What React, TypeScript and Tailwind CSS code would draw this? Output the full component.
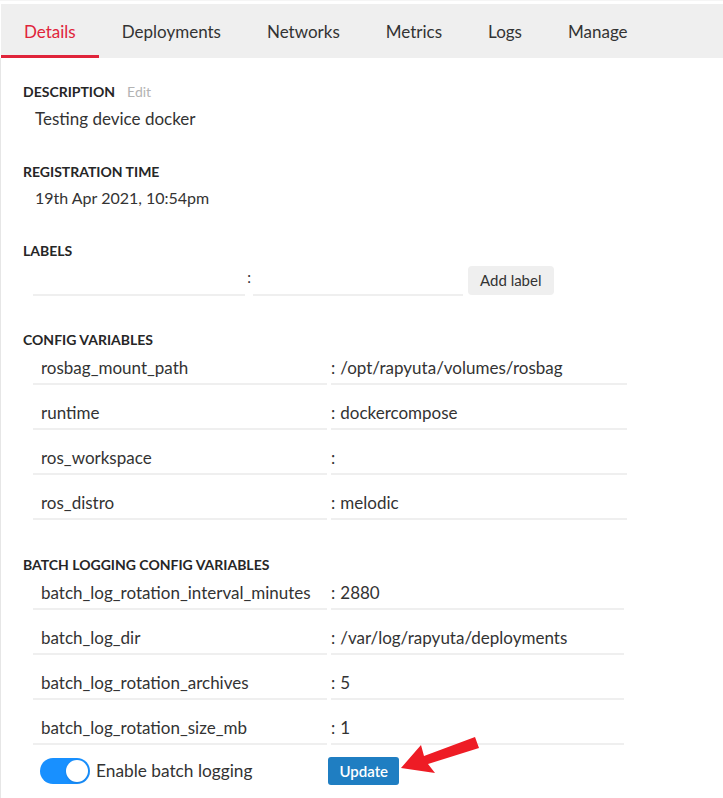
import { useState } from "react"

const tabs = ["Details", "Deployments", "Networks", "Metrics", "Logs", "Manage"]

const configVars = [
  { key: "rosbag_mount_path", value: "/opt/rapyuta/volumes/rosbag" },
  { key: "runtime", value: "dockercompose" },
  { key: "ros_workspace", value: "" },
  { key: "ros_distro", value: "melodic" },
]

const batchVars = [
  { key: "batch_log_rotation_interval_minutes", value: "2880" },
  { key: "batch_log_dir", value: "/var/log/rapyuta/deployments" },
  { key: "batch_log_rotation_archives", value: "5" },
  { key: "batch_log_rotation_size_mb", value: "1" },
]

function SectionTitle({ children }: { children: React.ReactNode }) {
  return <h3 className="text-[14px] font-bold uppercase text-[#262626] leading-5">{children}</h3>
}

function VarRow({ k, v, valueWidth }: { k: string; v: string; valueWidth: string }) {
  return (
    <div className="flex h-[35px]">
      <div className="w-[294px] h-full flex items-end pb-[3px] pl-2 border-b-2 border-[#efefef] text-[17px] leading-6 text-[#333] whitespace-nowrap">
        {k}
      </div>
      <div className={`${valueWidth} ml-1 h-full flex items-end pb-[3px] border-b-2 border-[#efefef] text-[17px] leading-6 text-[#333]`}>
        <span className="mr-[5px]">:</span>
        {v}
      </div>
    </div>
  )
}

export default function App() {
  const [active] = useState("Details")
  const [enabled, setEnabled] = useState(true)

  return (
    <div className="w-[723px] h-[798px] bg-white font-['Lato',sans-serif] text-[#333] overflow-hidden relative">
      {/* Tabs */}
      <div className="pt-[3px] border-t border-[#f5f5f5]">
        <nav className="flex bg-[#efefef] h-[54px] ml-px">
          {tabs.map((t) => (
            <button
              key={t}
              className={`px-[23px] pt-[4px] h-full text-[17px] border-b-[3px] ${
                t === active ? "text-[#e0243a] border-[#e0243a]" : "text-[#333] border-transparent"
              }`}
            >
              {t}
            </button>
          ))}
        </nav>
      </div>

      <div className="border-l border-[#e6e6e6] h-full pl-[22px] pt-[23px]">
        {/* Description */}
        <div className="flex items-center gap-3">
          <SectionTitle>Description</SectionTitle>
          <span className="text-[14px] text-[#b3b3b3]">Edit</span>
        </div>
        <p className="text-[17px] leading-6 pl-3 mt-[5px]">Testing device docker</p>

        {/* Registration time */}
        <div className="mt-[31px]">
          <SectionTitle>Registration time</SectionTitle>
        </div>
        <p className="text-[16px] leading-6 pl-3 mt-[4px]">19th Apr 2021, 10:54pm</p>

        {/* Labels */}
        <div className="mt-[31px]">
          <SectionTitle>Labels</SectionTitle>
        </div>
        <div className="flex items-end mt-[5px] pl-[10px]">
          <div className="w-[212px] h-[28px] border-b-2 border-[#efefef]" />
          <span className="w-[8px] text-center self-center text-[15px] -mt-2">:</span>
          <div className="w-[210px] h-[28px] border-b-2 border-[#efefef]" />
          <button className="ml-[5px] mb-[1px] h-[29px] px-3 rounded bg-[#efefef] text-[15px] text-[#333]">
            Add label
          </button>
        </div>

        {/* Config variables */}
        <div className="mt-[34px]">
          <SectionTitle>Config variables</SectionTitle>
        </div>
        <div className="pl-[10px] flex flex-col gap-[10px]">
          {configVars.map((r) => (
            <VarRow key={r.key} k={r.key} v={r.value} valueWidth="w-[296px]" />
          ))}
        </div>

        {/* Batch logging */}
        <div className="mt-[35px]">
          <SectionTitle>Batch logging config variables</SectionTitle>
        </div>
        <div className="pl-[10px] flex flex-col gap-[10px]">
          {batchVars.map((r) => (
            <VarRow key={r.key} k={r.key} v={r.value} valueWidth="w-[293px]" />
          ))}
        </div>

        <div className="flex items-center pl-[17px] mt-[12px]">
          <button
            onClick={() => setEnabled(!enabled)}
            className={`relative w-[50px] h-[26px] rounded-full ${enabled ? "bg-[#1890ff]" : "bg-[#ccc]"}`}
          >
            <span
              className={`absolute top-[2px] w-[22px] h-[22px] rounded-full bg-white shadow ${
                enabled ? "left-[26px]" : "left-[2px]"
              }`}
            />
          </button>
          <span className="ml-[6px] text-[17.3px] text-[#333]">Enable batch logging</span>
          <button className="ml-[76px] h-[28px] px-[11px] rounded-[3px] bg-[#1f7ec2] text-white text-[15px] font-semibold">
            Update
          </button>
        </div>
      </div>

      {/* Annotation arrow */}
      <svg className="absolute left-[399px] top-[735px]" width="84" height="42" viewBox="0 0 84 42">
        <polygon points="2,33 22,10 25,21 76,2 80,13 29,29 36,38" fill="#ee1c25" />
      </svg>
    </div>
  )
}
